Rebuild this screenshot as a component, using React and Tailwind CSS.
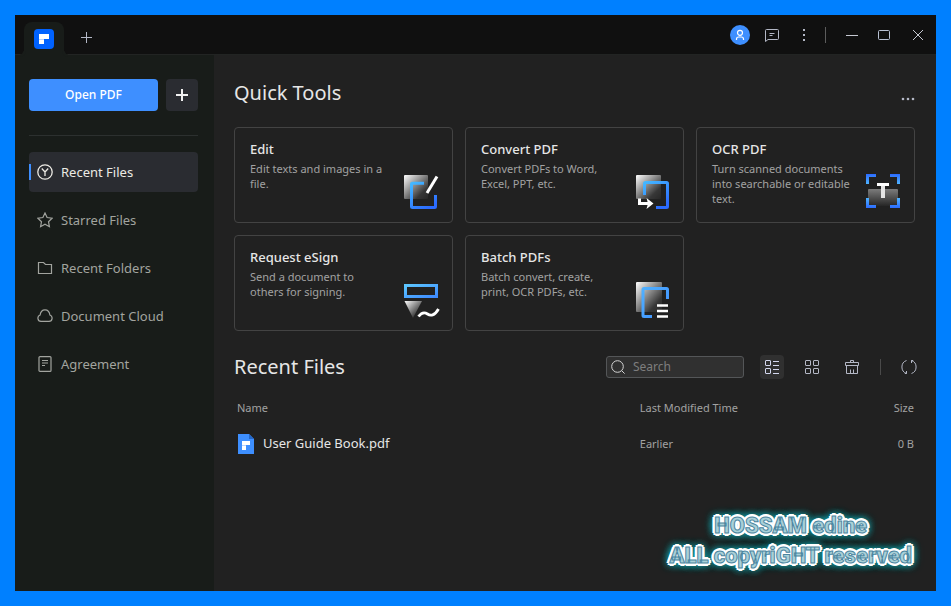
import { useState } from "react";

const NAV_ITEMS = [
  { label: "Recent Files", icon: ClockIcon },
  { label: "Starred Files", icon: StarIcon },
  { label: "Recent Folders", icon: FolderIcon },
  { label: "Document Cloud", icon: CloudIcon },
  { label: "Agreement", icon: AgreementIcon },
];

const TOOLS = [
  { title: "Edit", text: "Edit texts and images in a file.", icon: EditArt },
  { title: "Convert PDF", text: "Convert PDFs to Word, Excel, PPT, etc.", icon: ConvertArt },
  { title: "OCR PDF", text: "Turn scanned documents into searchable or editable text.", icon: OcrArt },
  { title: "Request eSign", text: "Send a document to others for signing.", icon: SignArt },
  { title: "Batch PDFs", text: "Batch convert, create, print, OCR PDFs, etc.", icon: BatchArt },
];

const FILES = [{ name: "User Guide Book.pdf", modified: "Earlier", size: "0 B" }];

export default function App() {
  return (
    <div className="flex min-h-screen bg-[#0080ff] p-[15px] font-['Noto_Sans','Open_Sans',sans-serif]">
      <div className="relative flex flex-1 flex-col bg-[#212121] text-[#e6e6e6]">
        <TitleBar />
        <div className="flex flex-1">
          <Sidebar />
          <main className="min-w-0 flex-1 pt-6 pr-[21px] pl-5">
            <QuickTools />
            <RecentFiles />
          </main>
        </div>
        <Signature />
      </div>
    </div>
  );
}

function TitleBar() {
  return (
    <header className="flex h-10 items-end justify-between border-b border-[#222423] bg-[#101010] pr-0.5 pl-[9px]">
      <div className="flex items-end">
        <div className="relative -mb-px flex h-[33px] w-10 items-center justify-center rounded-t-lg bg-[#181c19]">
          <span className="absolute bottom-0 -left-1.5 size-1.5 rounded-br-md shadow-[2px_2px_0_#181c19]" />
          <span className="absolute -right-1.5 bottom-0 size-1.5 rounded-bl-md shadow-[-2px_2px_0_#181c19]" />
          <svg viewBox="0 0 20 20" className="size-5">
            <rect width="20" height="20" rx="4" fill="#0062ff" />
            <path d="M5 5h10v5h-5H5z" fill="#fff" />
            <path d="M5 10h5v1H5z" fill="#b8d2ff" />
            <path d="M5 11h5v4H5z" fill="#fff" />
          </svg>
        </div>
        <button type="button" aria-label="New tab" className="ml-1.5 flex size-8 items-center justify-center">
          <svg viewBox="0 0 12 12" className="size-3" stroke="#b4b8c6" fill="none">
            <path d="M6.5 0v11M1 5.5h11" />
          </svg>
        </button>
      </div>

      <div className="flex items-center self-center">
        <button type="button" aria-label="Account" className="flex size-8 items-center justify-center">
          <svg viewBox="0 0 20 20" className="size-5" fill="none">
            <circle cx="10" cy="10" r="10" fill="#3e8fff" />
            <circle cx="10" cy="7.8" r="2.5" stroke="#fff" strokeWidth="1.2" />
            <path d="M6.5 15v-1c0-1.400 1.100-2 2.200-2h2.600c1.100 0 2.200.6 2.200 2v1" stroke="#fff" strokeWidth="1.2" />
          </svg>
        </button>
        <button type="button" aria-label="Feedback" className="flex size-8 items-center justify-center">
          <svg viewBox="0 0 16 16" className="size-4" stroke="#b4b8c6" fill="none">
            <path d="M2.500 2.500h11a1 1 0 0 1 1 1v8a1 1 0 0 1-1 1H4l-2.500 2V3.500a1 1 0 0 1 1-1z" />
            <path d="M5.500 6.500h5M5.500 8.500h3" />
          </svg>
        </button>
        <button type="button" aria-label="More options" className="flex size-8 items-center justify-center">
          <svg viewBox="0 0 16 16" className="size-4" fill="#b4b8c6">
            <path d="M7 2h2v2H7zM7 7h2v2H7zM7 12h2v2H7z" />
          </svg>
        </button>
        <span className="mr-2.5 ml-[5px] h-4 w-px bg-[#5c5c5c]" />
        <button type="button" aria-label="Minimize" className="flex size-8 items-center justify-center">
          <svg viewBox="0 0 12 12" className="size-3" stroke="#c6c9d2">
            <path d="M0 6.500h12" />
          </svg>
        </button>
        <button type="button" aria-label="Maximize" className="flex size-8 items-center justify-center">
          <svg viewBox="0 0 12 12" className="size-3" stroke="#b9c2d4" fill="none">
            <rect x=".5" y="1.500" width="11" height="9" rx="1" />
          </svg>
        </button>
        <button type="button" aria-label="Close" className="ml-0.5 flex size-8 items-center justify-center">
          <svg viewBox="0 0 12 12" className="size-3" stroke="#c6c9d2">
            <path d="M1 1l10 10M11 1L1 11" />
          </svg>
        </button>
      </div>
    </header>
  );
}

function Sidebar() {
  const [active, setActive] = useState("Recent Files");

  return (
    <aside className="w-[199px] shrink-0 bg-[#181c19] pt-6 pr-4 pl-3.5">
      <div className="flex gap-2">
        <button type="button" className="h-8 flex-1 rounded bg-[#3e8fff] text-xs font-medium text-white">
          Open PDF
        </button>
        <button type="button" aria-label="Create" className="flex size-8 items-center justify-center rounded bg-[#2a2c31]">
          <svg viewBox="0 0 12 12" className="size-3" stroke="#f0f0f0" strokeWidth="2">
            <path d="M6 0v12M0 6h12" />
          </svg>
        </button>
      </div>
      <div className="mt-6 mb-4 h-px bg-[#2c302f]" />
      <nav className="flex flex-col gap-2">
        {NAV_ITEMS.map(({ label, icon: Icon }) => {
          const current = label === active;
          return (
            <a
              key={label}
              href="#"
              aria-current={current ? "page" : undefined}
              onClick={() => setActive(label)}
              className={`relative flex h-10 items-center gap-2 rounded pl-2 text-[13px] ${
                current ? "bg-[#2a2c31] text-[#eceae4]" : "text-[#a2a49f]"
              }`}
            >
              {current && <span className="absolute left-0 h-4 w-0.5 bg-[#3e8fff]" />}
              <Icon />
              <span className="pt-0.5">{label}</span>
            </a>
          );
        })}
      </nav>
    </aside>
  );
}

function QuickTools() {
  return (
    <section>
      <div className="flex items-end justify-between">
        <h1 className="text-xl leading-7">Quick Tools</h1>
        <button type="button" aria-label="More tools" className="flex h-4 items-center">
          <svg viewBox="0 0 14 4" className="h-1 w-3.5" fill="#b4b8c6">
            <circle cx="2" cy="2" r="1.300" />
            <circle cx="7" cy="2" r="1.300" />
            <circle cx="12" cy="2" r="1.300" />
          </svg>
        </button>
      </div>
      <div className="mt-5 grid grid-cols-3 gap-3">
        {TOOLS.map((tool) => (
          <ToolCard key={tool.title} {...tool} />
        ))}
      </div>
    </section>
  );
}

function ToolCard({ title, text, icon: Icon }) {
  return (
    <button
      type="button"
      className="flex h-24 items-start justify-between rounded border border-[#434343] pt-[11px] pr-[13px] pb-3 pl-[15px] text-left"
    >
      <div className="w-[139px]">
        <h2 className="text-[13px] leading-5 font-medium">{title}</h2>
        <p className="mt-0.5 text-[11px] leading-[15px] text-[#a2a2a2]">{text}</p>
      </div>
      <span className="self-end">
        <Icon />
      </span>
    </button>
  );
}

function RecentFiles() {
  const [view, setView] = useState("list");
  const [query, setQuery] = useState("");

  const files = FILES.filter((f) => f.name.toLowerCase().includes(query.toLowerCase()));

  return (
    <section className="mt-6">
      <div className="flex items-center justify-between">
        <h1 className="text-xl leading-6">Recent Files</h1>
        <div className="-mr-1.5 flex items-center gap-4">
          <label className="flex h-[22px] w-[138px] items-center gap-2 rounded-[3px] border border-[#545658] bg-[#303030] pl-1">
            <svg viewBox="0 0 14 14" className="size-3.5 shrink-0" stroke="#d6d6d6" fill="none">
              <circle cx="6.500" cy="6.500" r="5.800" />
              <path d="M10.800 10.800l2.800 2.800" />
            </svg>
            <input
              type="text"
              aria-label="Search"
              placeholder="Search"
              value={query}
              onChange={(e) => setQuery(e.target.value)}
              className="w-full min-w-0 text-xs outline-none placeholder:text-[#7e7e7e]"
            />
          </label>
          <button
            type="button"
            aria-label="List view"
            onClick={() => setView("list")}
            className={`flex size-6 items-center justify-center rounded ${view === "list" ? "bg-[#303030]" : ""}`}
          >
            <svg viewBox="0 0 16 16" className="size-4" stroke="#d3d7ee" fill="none">
              <rect x="1.500" y="1.500" width="5" height="5" rx=".5" />
              <rect x="1.500" y="9.500" width="5" height="5" rx=".5" />
              <path d="M9 2.500h6M9 6.500h6M9 10.500h6M9 14.500h6" />
            </svg>
          </button>
          <button
            type="button"
            aria-label="Grid view"
            onClick={() => setView("grid")}
            className={`flex size-6 items-center justify-center rounded ${view === "grid" ? "bg-[#303030]" : ""}`}
          >
            <svg viewBox="0 0 16 16" className="size-4" stroke="#b4b8c6" fill="none">
              <rect x="1.500" y="1.500" width="5" height="5" rx=".5" />
              <rect x="9.500" y="1.500" width="5" height="5" rx=".5" />
              <rect x="1.500" y="9.500" width="5" height="5" rx=".5" />
              <rect x="9.500" y="9.500" width="5" height="5" rx=".5" />
            </svg>
          </button>
          <button type="button" aria-label="Clear list" className="flex size-6 items-center justify-center">
            <svg viewBox="0 0 16 16" className="size-4" stroke="#b4b8c6" fill="none">
              <path d="M6.500 3.500v-2h3v2M1.500 3.500h13v3h-13zM2.500 6.500v8h11v-8M6.500 14.500v-4M9.500 14.500v-4" />
            </svg>
          </button>
          <span className="h-4 w-px bg-[#4a4a4a]" />
          <button type="button" aria-label="Refresh" className="flex size-6 items-center justify-center">
            <svg viewBox="0 0 16 16" className="size-4" stroke="#b4b8c6" fill="none">
              <path d="M5.500 1.500A6.900 6.900 0 0 0 5.500 14.500M10.500 1.500A6.900 6.900 0 0 1 10.500 14.500" />
              <path d="M5.500 12v2.500H3.800M10.500 4V1.500h1.700" />
            </svg>
          </button>
        </div>
      </div>

      <table className="mt-[11px] w-full table-fixed text-left text-[11px] text-[#a2a2a2]">
        <thead>
          <tr className="h-9">
            <th className="w-[59%] pl-[3px] font-normal">Name</th>
            <th className="pl-1 font-normal">Last Modified Time</th>
            <th className="w-24 pr-px text-right font-normal">Size</th>
          </tr>
        </thead>
        <tbody>
          {files.map((file) => (
            <tr key={file.name} className="h-9">
              <td className="pl-[3px]">
                <span className="flex items-center gap-2 text-[13px] text-[#e6e6e6]">
                  <svg viewBox="0 0 18 20" className="h-5 w-[18px]">
                    <path d="M1 0h11l5 5v15H1z" fill="#3e8fff" />
                    <path d="M12 0l5 5h-5z" fill="#2467c9" />
                    <path d="M5 7h8v4H9v1H5z" fill="#fff" />
                    <path d="M5 11h4v1H5z" fill="#b8d2ff" />
                    <path d="M5 12h4v4H5z" fill="#fff" />
                  </svg>
                  {file.name}
                </span>
              </td>
              <td className="pl-1">{file.modified}</td>
              <td className="pr-px text-right">{file.size}</td>
            </tr>
          ))}
        </tbody>
      </table>
    </section>
  );
}

// Glowing lettering over the lower right corner of the window
function Signature() {
  return (
    <div className="pointer-events-none absolute right-6 bottom-5 text-center font-['Roboto',sans-serif] text-[22px] leading-[30px] font-black whitespace-nowrap text-[#a9d0d8] [-webkit-text-stroke:1px_#4b86a0] [text-shadow:3px_0_0_#fff,-3px_0_0_#fff,0_3px_0_#fff,0_-3px_0_#fff,2px_2px_0_#fff,-2px_2px_0_#fff,2px_-2px_0_#fff,-2px_-2px_0_#fff,0_0_8px_#12a0a8,0_0_8px_#12a0a8,0_0_10px_#12a0a8,0_0_10px_#12a0a8,0_0_12px_#12a0a8]">
      <p>HOSSAM edine</p>
      <p>ALL copyriGHT reserved</p>
    </div>
  );
}

function ClockIcon() {
  return (
    <svg viewBox="0 0 16 16" className="size-4" stroke="currentColor" strokeWidth="1.300" fill="none">
      <circle cx="8" cy="8" r="7.200" />
      <path d="M4.800 4.500L8 8l3.200-3.500M8 8v4" />
    </svg>
  );
}

function StarIcon() {
  return (
    <svg viewBox="0 0 16 16" className="size-4" stroke="currentColor" strokeWidth="1.200" fill="none">
      <path d="M8 1l2.100 4.500 5 .7-3.600 3.500.9 5L8 12.300l-4.400 2.400.9-5L.9 6.200l5-.7z" />
    </svg>
  );
}

function FolderIcon() {
  return (
    <svg viewBox="0 0 16 16" className="size-4" stroke="currentColor" strokeWidth="1.200" fill="none">
      <path d="M1.500 2.500h5l2 2h6v9h-13z" />
    </svg>
  );
}

function CloudIcon() {
  return (
    <svg viewBox="0 0 16 16" className="size-4" stroke="currentColor" strokeWidth="1.200" fill="none">
      <path d="M4 13.400a3.300 3.300 0 0 1-.9-6.400C3.500 3.800 5.500 1.800 8 1.800s4.500 2 4.900 5.200a3.300 3.300 0 0 1-.9 6.400z" />
    </svg>
  );
}

function AgreementIcon() {
  return (
    <svg viewBox="0 0 16 16" className="size-4" stroke="currentColor" strokeWidth="1.200" fill="none">
      <rect x="2" y=".6" width="12" height="14.800" rx="1" />
      <path d="M5 4.500h6M5 7h6M5 9.500h3" strokeWidth="1" />
    </svg>
  );
}

// Shared pieces of the tool drawings
function Gradients({ id }) {
  return (
    <defs>
      <linearGradient id={`${id}-gray`} x1="0" y1="0" x2="1" y2="1">
        <stop offset="0" stopColor="#fff" />
        <stop offset=".75" stopColor="#fff" stopOpacity=".1" />
        <stop offset="1" stopColor="#fff" stopOpacity=".03" />
      </linearGradient>
      <linearGradient id={`${id}-blue`} gradientUnits="userSpaceOnUse" x1="10" y1="8" x2="26" y2="34">
        <stop offset="0" stopColor="#45baff" />
        <stop offset="1" stopColor="#2b6bff" />
      </linearGradient>
    </defs>
  );
}

function EditArt() {
  return (
    <svg viewBox="0 0 36 36" className="size-9" fill="none">
      <Gradients id="edit" />
      <rect x="1" y="1" width="24" height="24" rx="1" fill="url(#edit-gray)" />
      <path d="M21 9.200H9.500a1 1 0 0 0-1 1v22.300a1 1 0 0 0 1 1h22a1 1 0 0 0 1-1V21" stroke="url(#edit-blue)" strokeWidth="3" />
      <path d="M34 2.500L24 19" stroke="#fff" strokeWidth="3" />
    </svg>
  );
}

function ConvertArt() {
  return (
    <svg viewBox="0 0 36 36" className="size-9" fill="none">
      <Gradients id="convert" />
      <rect x="2" y="1" width="25" height="24" rx="1" fill="url(#convert-gray)" />
      <path d="M10.500 21V9.500a1 1 0 0 1 1-1h21a1 1 0 0 1 1 1v23a1 1 0 0 1-1 1H22" stroke="url(#convert-blue)" strokeWidth="3" />
      <path d="M5.500 24.500v5H15" stroke="#fff" strokeWidth="3" />
      <path d="M12.500 24l7 5.500-7 5.500 1.500-5.500z" fill="#fff" />
    </svg>
  );
}

function OcrArt() {
  return (
    <svg viewBox="0 0 36 36" className="size-9" fill="none">
      <defs>
        <linearGradient id="ocr-gray" x1="0" y1="0" x2="0" y2="1">
          <stop offset="0" stopColor="#7c7c7c" />
          <stop offset="1" stopColor="#262626" />
        </linearGradient>
        <linearGradient id="ocr-top" gradientUnits="userSpaceOnUse" x1="0" y1="0" x2="0" y2="10">
          <stop offset="0" stopColor="#2b6bff" />
          <stop offset="1" stopColor="#4fb4ff" />
        </linearGradient>
        <linearGradient id="ocr-bottom" gradientUnits="userSpaceOnUse" x1="0" y1="24" x2="0" y2="34">
          <stop offset="0" stopColor="#4fb4ff" />
          <stop offset="1" stopColor="#2b6bff" />
        </linearGradient>
      </defs>
      <rect x="3" y="15" width="30" height="17" rx="1" fill="url(#ocr-gray)" />
      <path d="M2.500 10V1.500H11M25 1.500h8.500V10" stroke="url(#ocr-top)" strokeWidth="3" />
      <path d="M2.500 24v8.500H11M25 32.500h8.500V24" stroke="url(#ocr-bottom)" strokeWidth="3" />
      <path d="M18 12v12" stroke="#e4e4e4" strokeWidth="4" />
      <path d="M12 10.500h12" stroke="#fff" strokeWidth="3" />
    </svg>
  );
}

function SignArt() {
  return (
    <svg viewBox="0 0 36 36" className="size-9 overflow-visible" fill="none">
      <defs>
        <linearGradient id="sign-blue" x1="0" y1="0" x2="1" y2="1">
          <stop offset="0" stopColor="#5cc6ff" />
          <stop offset="1" stopColor="#3e8bff" />
        </linearGradient>
      </defs>
      <Gradients id="sign" />
      <rect x="2.500" y="3.500" width="31" height="11" stroke="url(#sign-blue)" strokeWidth="3" />
      <path d="M1.500 19h17.500l-9 17z" fill="url(#sign-gray)" />
      <path d="M15.500 34.500c3-4 6-4.500 9-2.500s7 2 11-5" stroke="#fff" strokeWidth="2.800" />
    </svg>
  );
}

function BatchArt() {
  return (
    <svg viewBox="0 0 36 36" className="size-9" fill="none">
      <defs>
        <linearGradient id="batch-line" x1="0" y1="0" x2="1" y2="1">
          <stop offset="0" stopColor="#4fb0ff" />
          <stop offset="1" stopColor="#3e8fff" />
        </linearGradient>
      </defs>
      <Gradients id="batch" />
      <rect x="2" width="26" height="30" rx="1" fill="url(#batch-gray)" />
      <path d="M18 34.500h-8a1 1 0 0 1-1-1V7.500a1 1 0 0 1 1-1h22.500a1 1 0 0 1 1 1V17" stroke="url(#batch-line)" strokeWidth="3" />
      <path d="M23 23.500h11M23 29h11M23 34.500h11" stroke="#fff" strokeWidth="2.600" />
    </svg>
  );
}
